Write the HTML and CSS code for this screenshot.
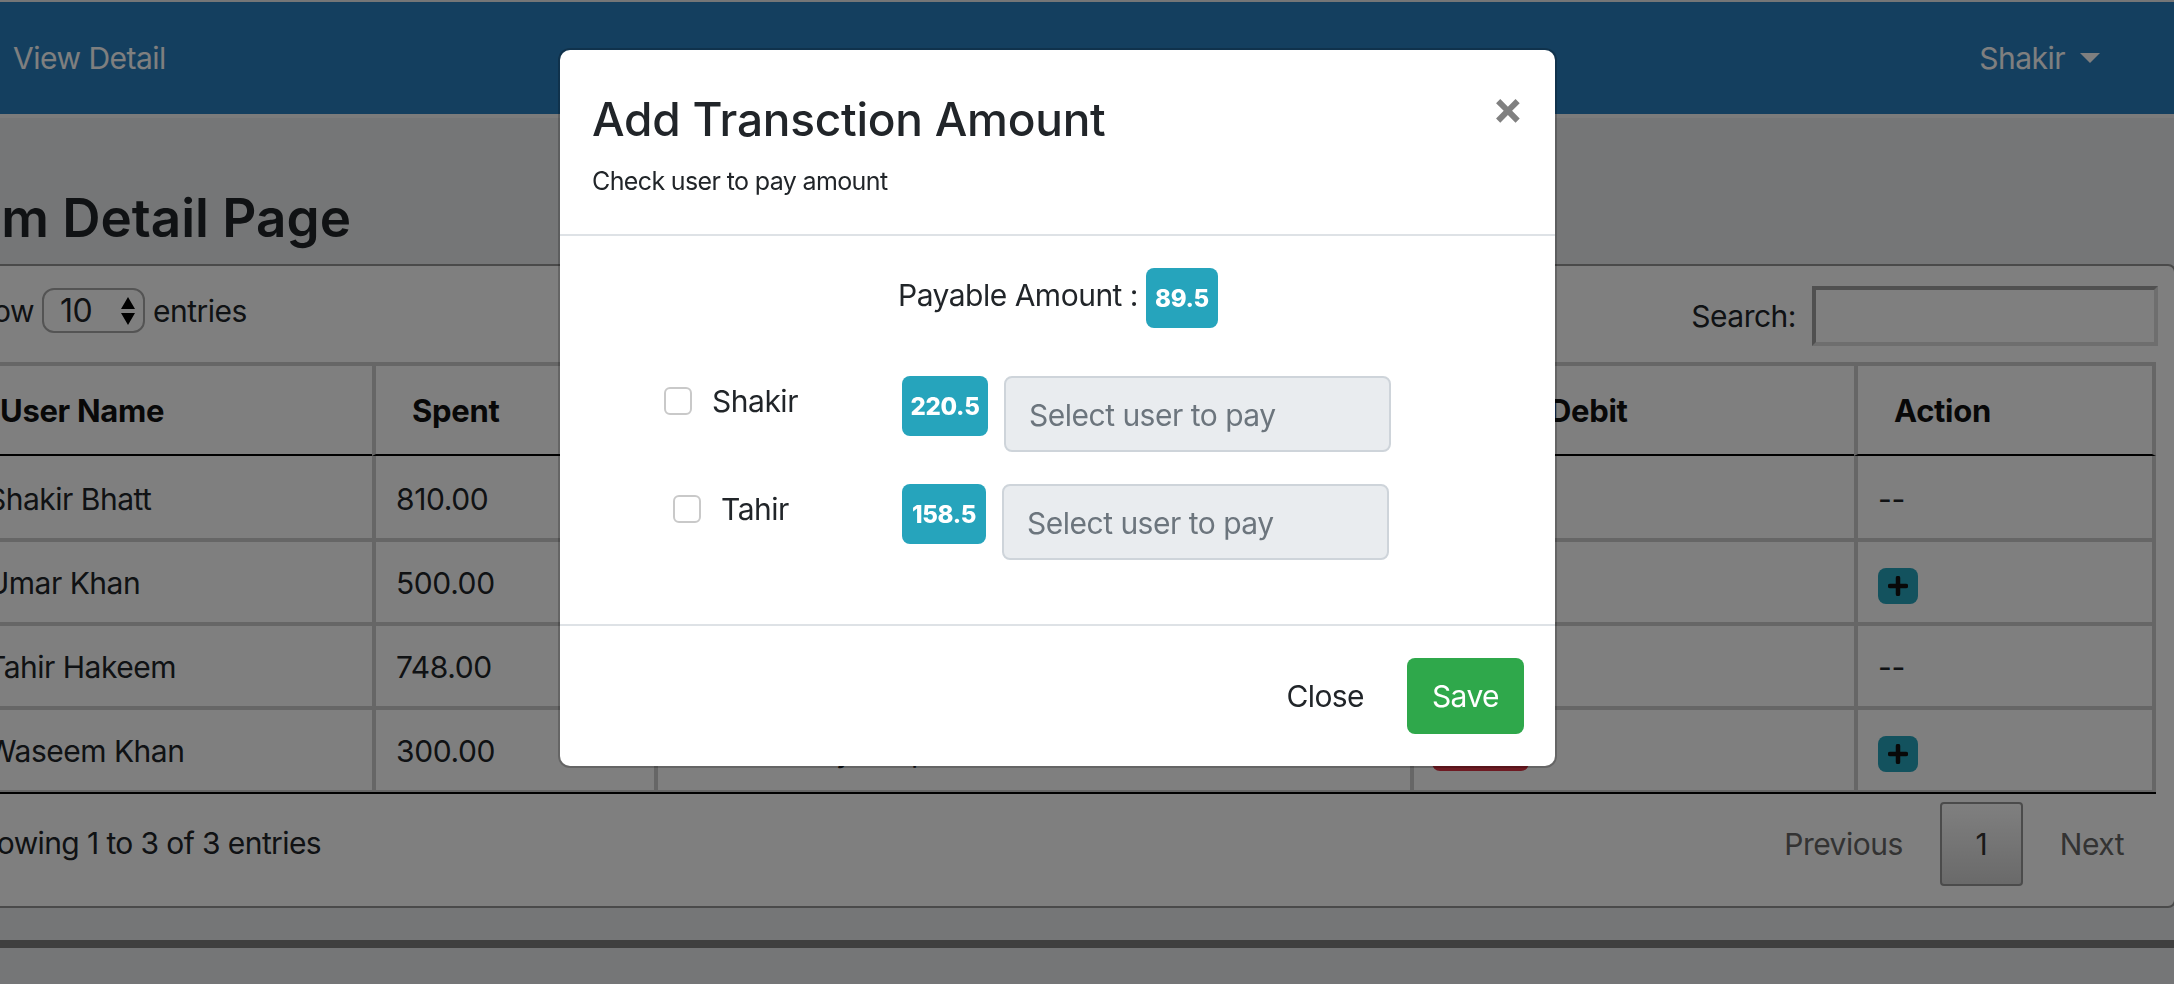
FILE: index.html
```html
<!DOCTYPE html>
<html lang="en">
<head>
	<meta charset="UTF-8">
	<title>Team Detail Page</title>
	<link rel="stylesheet" href="styles.css">
</head>
<body>
	<div class="page">
		<nav class="topbar">
			<a class="nav-link">View Detail</a>
			<a class="nav-link nav-user">Shakir <span class="caret"></span></a>
		</nav>

		<h1 class="page-title">Team Detail Page</h1>

		<div class="card">
			<div class="table-tools">
				<div class="length">
					<span>Show</span>
					<div class="fake-select">
						<span class="select-value">10</span>
						<svg class="select-arrows" width="16" height="28" viewBox="0 0 16 28">
							<path d="M8 0 L15 12 L1 12 Z M1 16 L15 16 L8 28 Z" fill="#000"/>
						</svg>
					</div>
					<span>entries</span>
				</div>
				<label class="search">
					<span>Search:</span>
					<input class="search-input" type="text">
				</label>
			</div>

			<table class="detail-table">
				<colgroup>
					<col class="col-name">
					<col class="col-spent">
					<col class="col-desc">
					<col class="col-debit">
					<col class="col-action">
				</colgroup>
				<thead>
					<tr>
						<th>User Name</th>
						<th>Spent</th>
						<th>Description</th>
						<th class="th-debit">Debit</th>
						<th>Action</th>
					</tr>
				</thead>
				<tbody>
					<tr>
						<td>Shakir Bhatt</td>
						<td>810.00</td>
						<td></td>
						<td></td>
						<td>--</td>
					</tr>
					<tr>
						<td>Umar Khan</td>
						<td>500.00</td>
						<td></td>
						<td></td>
						<td>
							<span class="add-btn">
								<svg width="20" height="20" viewBox="0 0 20 20"><path d="M10 2 V18 M2 10 H18" stroke="#111" stroke-width="4.5" stroke-linecap="round"/></svg>
							</span>
						</td>
					</tr>
					<tr>
						<td>Tahir Hakeem</td>
						<td>748.00</td>
						<td></td>
						<td></td>
						<td>--</td>
					</tr>
					<tr>
						<td>Waseem Khan</td>
						<td>300.00</td>
						<td>Dinner at my shop</td>
						<td><span class="debit-badge"></span></td>
						<td>
							<span class="add-btn">
								<svg width="20" height="20" viewBox="0 0 20 20"><path d="M10 2 V18 M2 10 H18" stroke="#111" stroke-width="4.5" stroke-linecap="round"/></svg>
							</span>
						</td>
					</tr>
				</tbody>
			</table>

			<div class="table-foot">
				<div class="info">Showing 1 to 3 of 3 entries</div>
				<div class="pager">
					<a class="pager-link">Previous</a>
					<a class="pager-current">1</a>
					<a class="pager-link">Next</a>
				</div>
			</div>
		</div>

		<div class="page-rule"></div>
	</div>

	<div class="backdrop"></div>

	<div class="modal">
		<div class="modal-header">
			<div>
				<h3 class="modal-title">Add Transction Amount</h3>
				<p class="modal-sub">Check user to pay amount</p>
			</div>
			<span class="close">&times;</span>
		</div>

		<div class="modal-body">
			<div class="payable">
				<span class="payable-label">Payable Amount :</span>
				<span class="badge">89.5</span>
			</div>

			<div class="pay-row">
				<label class="pay-user"><span class="check"></span>Shakir</label>
				<span class="badge badge-row">220.5</span>
				<input class="pay-input" type="text" placeholder="Select user to pay" disabled>
			</div>
			<div class="pay-row">
				<label class="pay-user"><span class="check"></span>Tahir</label>
				<span class="badge badge-row badge-narrow">158.5</span>
				<input class="pay-input" type="text" placeholder="Select user to pay" disabled>
			</div>
		</div>

		<div class="modal-footer">
			<a class="btn btn-plain">Close</a>
			<a class="btn btn-save">Save</a>
		</div>
	</div>
</body>
</html>
```

FILE: styles.css
```css
html, body {
	margin: 0;
	padding: 0;
	height: 984px;
	overflow: hidden;
}

body {
	background: #eaecee;
	color: #212529;
	font-family: "Inter", "Liberation Sans", sans-serif;
	font-size: 30px;
	letter-spacing: -0.5px;
	padding-top: 2px;
	box-sizing: border-box;
}

/* the page is scrolled a little to the right, so it starts off screen */
.page {
	width: 2236px;
	margin-left: -60px;
}

.topbar {
	height: 112px;
	background: #287ebe;
	border-bottom: 4px solid #f6f6f6;
	display: flex;
	align-items: center;
	justify-content: space-between;
	padding: 0 76px 0 73px;
}

.nav-link {
	color: #fff;
}

.nav-user {
	display: flex;
	align-items: center;
	gap: 15px;
}

.caret {
	width: 0;
	height: 0;
	border-top: 10px solid #fff;
	border-left: 10px solid transparent;
	border-right: 10px solid transparent;
}

.page-title {
	margin: 0 0 0 -32px;
	height: 146px;
	box-sizing: border-box;
	padding-top: 70px;
	font-size: 53px;
	line-height: 60px;
	font-weight: 600;
	letter-spacing: 0;
}

.card {
	height: 644px;
	box-sizing: border-box;
	background: #fff;
	border: 2px solid #949494;
	border-radius: 8px;
}

.table-tools {
	height: 96px;
	box-sizing: border-box;
	display: flex;
	justify-content: space-between;
	align-items: flex-start;
	padding: 20px 16px 0 15px;
}

.length {
	display: flex;
	align-items: center;
	gap: 8px;
	margin-top: 2px;
}

.fake-select {
	width: 103px;
	height: 45px;
	box-sizing: border-box;
	border: 2px solid #a8a8a8;
	border-radius: 12px;
	display: flex;
	align-items: center;
	justify-content: space-between;
	padding: 0 7px 0 16px;
}

.select-value {
	font-size: 32px;
}

.select-arrows {
	display: block;
}

.search {
	display: flex;
	align-items: center;
	gap: 16px;
}

.search-input {
	width: 346px;
	height: 60px;
	box-sizing: border-box;
	background: transparent;
	border: 4px solid #dcdcdc;
	border-top-color: #a0a0a0;
	border-left-color: #a0a0a0;
}

.detail-table {
	margin-left: 23px;
	width: 2191px;
	table-layout: fixed;
	border-collapse: separate;
	border-spacing: 0;
	border-top: 4px solid #ccc;
	border-bottom: 2px solid #000;
}

.col-name { width: 407px; }
.col-spent { width: 282px; }
.col-desc { width: 756px; }
.col-debit { width: 444px; }
.col-action { width: 302px; }

.detail-table th,
.detail-table td {
	text-align: left;
	box-sizing: border-box;
	border-left: 4px solid #ccc;
	white-space: nowrap;
}

.detail-table th:first-child,
.detail-table td:first-child {
	border-left: none;
}

.detail-table th:last-child,
.detail-table td:last-child {
	border-right: 4px solid #ccc;
}

.detail-table th {
	height: 90px;
	padding: 0 0 0 36px;
	font-size: 31px;
	font-weight: 700;
	letter-spacing: -0.3px;
	color: #111;
	border-bottom: 2px solid #000;
}

.detail-table th:first-child {
	padding-left: 35px;
}

.detail-table th.th-debit {
	padding-left: 135px;
}

.detail-table td {
	height: 84px;
	padding: 2px 0 0 20px;
	border-bottom: 4px solid #ccc;
	letter-spacing: -0.4px;
}

.detail-table td:first-child {
	padding-left: 22px;
	letter-spacing: -0.5px;
}

.detail-table tbody tr:first-child td {
	height: 86px;
	padding-top: 4px;
}

.detail-table tbody tr:last-child td {
	height: 82px;
	border-bottom: 2px solid #ccc;
}

.add-btn {
	width: 40px;
	height: 36px;
	margin-top: 6px;
	background: #26a4bc;
	border-radius: 8px;
	display: flex;
	align-items: center;
	justify-content: center;
}

.debit-badge {
	display: block;
	width: 97px;
	height: 56px;
	margin: 0 0 16px -2px;
	background: #dc3545;
	border-radius: 8px;
}

.table-foot {
	display: flex;
	justify-content: space-between;
	align-items: flex-start;
	padding: 8px 50px 0 19px;
}

.info {
	margin-top: 23px;
	letter-spacing: -0.6px;
}

.pager {
	display: flex;
	align-items: center;
	gap: 37px;
	color: #666;
}

.pager-current {
	width: 83px;
	height: 84px;
	box-sizing: border-box;
	border: 2px solid #979797;
	border-radius: 4px;
	background: linear-gradient(#fff, #d4d4d4);
	color: #333;
	display: flex;
	align-items: center;
	justify-content: center;
}

.page-rule {
	height: 8px;
	margin-top: 32px;
	background: #7e7e7e;
}

/* modal sits over everything */
.backdrop {
	position: fixed;
	top: 0;
	left: 0;
	right: 0;
	bottom: 0;
	background: rgba(0, 0, 0, 0.5);
}

.modal {
	position: absolute;
	top: 50px;
	left: 560px;
	width: 995px;
	height: 716px;
	background: #fff;
	box-shadow: 0 0 0 2px rgba(0, 0, 0, 0.2);
	border-radius: 10px;
}

.modal-header {
	height: 186px;
	box-sizing: border-box;
	border-bottom: 2px solid #dee2e6;
	display: flex;
	justify-content: space-between;
	align-items: flex-start;
	padding: 41px 32px 0 32px;
}

.modal-title {
	margin: 0;
	font-size: 46px;
	line-height: 56px;
	font-weight: 500;
	letter-spacing: -0.25px;
}

.modal-sub {
	margin: 16px 0 0 0;
	font-size: 25px;
	line-height: 36px;
	letter-spacing: -0.63px;
}

.close {
	color: #808080;
	font-size: 46px;
	line-height: 46px;
	font-weight: 700;
	margin-top: -7px;
}

.modal-body {
	height: 390px;
	box-sizing: border-box;
	border-bottom: 2px solid #dee2e6;
	padding: 32px 32px 0 32px;
}

.payable {
	display: flex;
	justify-content: center;
	align-items: flex-start;
	gap: 8px;
	height: 60px;
	margin: 0 0 48px 1px;
}

.payable-label {
	line-height: 54px;
}

.badge {
	display: flex;
	align-items: center;
	justify-content: center;
	height: 60px;
	width: 72px;
	background: #26a4bc;
	color: #fff;
	border-radius: 8px;
	font-size: 24px;
	font-weight: 800;
	letter-spacing: -0.3px;
}

.pay-row {
	display: flex;
	align-items: flex-start;
	margin-bottom: 32px;
}

.pay-user {
	width: 278px;
	margin-right: 32px;
	height: 50px;
	display: flex;
	align-items: center;
	justify-content: center;
	gap: 20px;
}

.check {
	width: 28px;
	height: 28px;
	box-sizing: border-box;
	border: 2px solid #c9c9c9;
	border-radius: 6px;
	background: #fff;
}

.badge-row {
	width: 86px;
	flex: none;
}

.badge-narrow {
	width: 84px;
}

.pay-input {
	margin-left: 16px;
	width: 387px;
	height: 76px;
	box-sizing: border-box;
	background: #e9ecef;
	border: 2px solid #ced4da;
	border-radius: 8px;
	padding: 2px 24px 0 23px;
	font: inherit;
	letter-spacing: inherit;
}

.pay-input::placeholder {
	color: #6c757d;
	opacity: 1;
}

.modal-footer {
	display: flex;
	justify-content: flex-end;
	align-items: center;
	gap: 17px;
	padding: 32px 31px 0 0;
	letter-spacing: -0.6px;
}

.btn {
	height: 76px;
	box-sizing: border-box;
	padding: 0 26px;
	border-radius: 8px;
	display: flex;
	align-items: center;
}

.btn-save {
	padding: 0 25px;
	background: #2fa84b;
	color: #fff;
}
```
